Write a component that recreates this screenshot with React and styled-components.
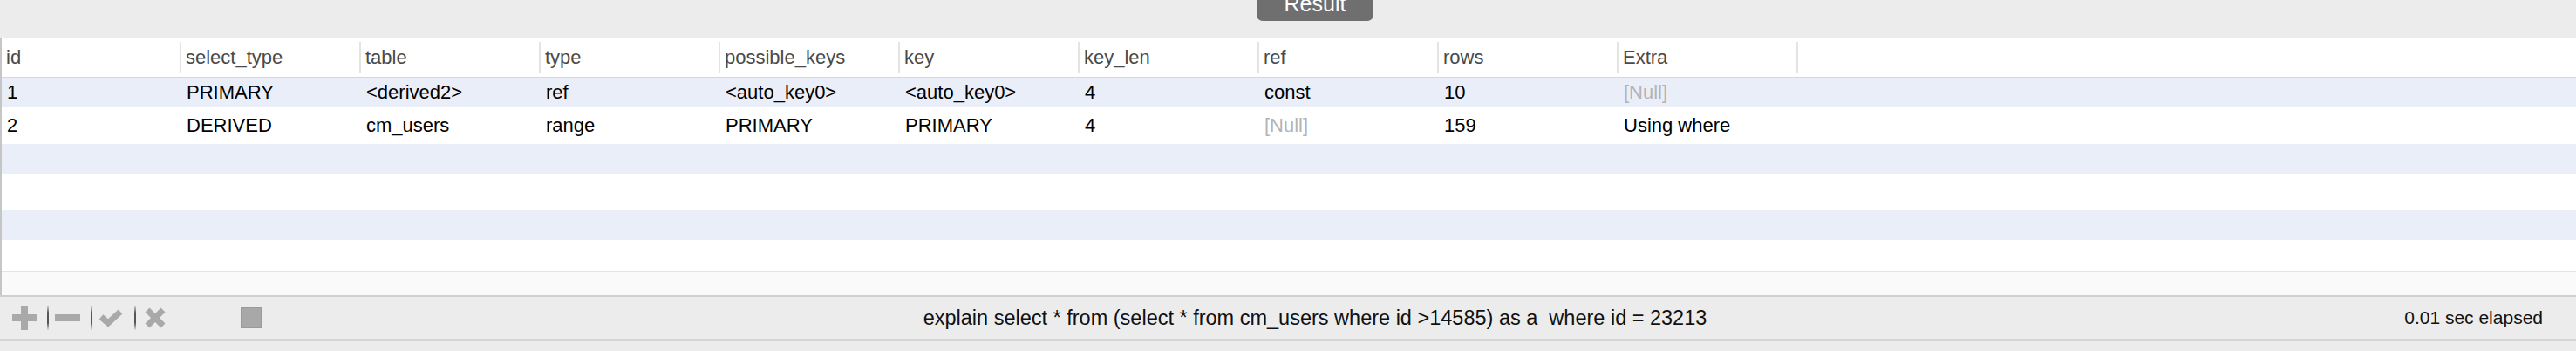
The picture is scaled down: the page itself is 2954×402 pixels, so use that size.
import React from "react"
import styled, { createGlobalStyle } from "styled-components"

const GlobalStyle = createGlobalStyle`
    html, body {
        margin: 0;
        padding: 0;
        background: #ececec;
    }
    body {
        font-family: "Liberation Sans", Arial, sans-serif;
    }
`

const COL_WIDTH = 206

const columns = ["id", "select_type", "table", "type", "possible_keys", "key", "key_len", "ref", "rows", "Extra"]

const rows = [
    ["1", "PRIMARY", "<derived2>", "ref", "<auto_key0>", "<auto_key0>", "4", "const", "10", null],
    ["2", "DERIVED", "cm_users", "range", "PRIMARY", "PRIMARY", "4", null, "159", "Using where"],
    [], [], [], [],
]

const Window = styled.div`
    width: 2954px;
    height: 402px;
    display: flex;
    flex-direction: column;
    overflow: hidden;
    background: #ececec;
`

const TopBar = styled.div`
    height: 43px;
    flex-shrink: 0;
    display: flex;
    justify-content: center;
    align-items: flex-start;
    padding-left: 62px;
    background: #ececec;
    border-bottom: 1px solid #d2d2d2;
`

const Tab = styled.div`
    width: 134px;
    height: 24px;
    overflow: hidden;
    display: flex;
    justify-content: center;
    background: #6f6f6f;
    border-radius: 0 0 7px 7px;
`

const TabLabel = styled.span`
    display: block;
    margin-top: -8px;
    line-height: 24px;
    font-size: 25px;
    color: #ffffff;
`

const Grid = styled.div`
    display: flex;
    flex-direction: column;
    border-left: 2px solid #c6c6c6;
    background: #ffffff;
`

const HeaderRow = styled.div`
    height: 44px;
    display: flex;
    border-bottom: 1px solid #d6d6d6;
    background: #ffffff;
`

const HeaderCell = styled.div`
    width: ${COL_WIDTH}px;
    flex-shrink: 0;
    display: flex;
    align-items: center;
    box-sizing: border-box;
    padding-left: 5px;
`

const HeaderText = styled.span`
    flex: 1;
    font-size: 22px;
    color: #4a4a4a;
    white-space: nowrap;
`

const Divider = styled.div`
    width: 2px;
    height: 36px;
    background: #e4e4e4;
`

const Body = styled.div`
    height: 221px;
    overflow: hidden;
    display: flex;
    flex-direction: column;
`

const Row = styled.div`
    height: ${({ $odd }) => ($odd ? 34 : 42)}px;
    flex-shrink: 0;
    display: flex;
    align-items: center;
    background: ${({ $odd }) => ($odd ? "#eaeef8" : "#ffffff")};
`

const Cell = styled.div`
    width: ${COL_WIDTH}px;
    flex-shrink: 0;
    box-sizing: border-box;
    padding-left: 6px;
    font-size: 22px;
    white-space: nowrap;
    color: ${({ $null }) => ($null ? "#b4b4b4" : "#000000")};
`

const FooterStrip = styled.div`
    height: 26px;
    border-top: 2px solid #e4e4e4;
    background: #fafafa;
`

const Toolbar = styled.div`
    height: 48px;
    flex-shrink: 0;
    display: grid;
    grid-template-columns: 400px 1fr 338px;
    align-items: center;
    border-top: 2px solid #cfcfcf;
    border-bottom: 2px solid #d6d6d6;
    background: #ececec;
`

const Tools = styled.div`
    display: flex;
    align-items: center;
    padding-left: 14px;
`

const ToolButton = styled.div`
    display: flex;
    align-items: center;
    justify-content: center;
    margin-right: ${({ $gap }) => $gap}px;
`

const ToolSep = styled.div`
    width: 2px;
    height: 28px;
    margin-right: ${({ $gap }) => $gap}px;
    background: linear-gradient(to bottom, rgba(80, 80, 80, 0.1), #555 30%, #555 70%, rgba(80, 80, 80, 0.1));
`

const Query = styled.div`
    text-align: center;
    font-size: 23.5px;
    color: #111111;
    white-space: pre;
`

const Elapsed = styled.div`
    text-align: right;
    padding-right: 38px;
    font-size: 21px;
    color: #111111;
    white-space: nowrap;
`

const ICON = "#a9a9a9"

function PlusIcon() {
    return (
        <svg width="28" height="28" viewBox="0 0 28 28">
            <rect x="10" y="0" width="8" height="28" fill={ICON} />
            <rect x="0" y="10" width="28" height="8" fill={ICON} />
        </svg>
    )
}

function MinusIcon() {
    return (
        <svg width="29" height="8" viewBox="0 0 29 8">
            <rect x="0" y="0" width="29" height="8" fill={ICON} />
        </svg>
    )
}

function CheckIcon() {
    return (
        <svg width="28" height="20" viewBox="0 0 28 20">
            <polyline points="3,9 11,16 25,3" fill="none" stroke={ICON} strokeWidth="7" strokeLinejoin="miter" />
        </svg>
    )
}

function CrossIcon() {
    return (
        <svg width="24" height="24" viewBox="0 0 24 24">
            <line x1="3" y1="3" x2="21" y2="21" stroke={ICON} strokeWidth="7" />
            <line x1="21" y1="3" x2="3" y2="21" stroke={ICON} strokeWidth="7" />
        </svg>
    )
}

function StopIcon() {
    return (
        <svg width="24" height="24" viewBox="0 0 24 24">
            <rect x="0.5" y="0.5" width="23" height="23" fill="#a8a8a8" stroke="#9a9a9a" />
        </svg>
    )
}

export default function App() {
    return (
        <Window>
            <GlobalStyle />
            <TopBar>
                <Tab>
                    <TabLabel>Result</TabLabel>
                </Tab>
            </TopBar>
            <Grid>
                <HeaderRow>
                    {columns.map((name) => (
                        <HeaderCell key={name}>
                            <HeaderText>{name}</HeaderText>
                            <Divider />
                        </HeaderCell>
                    ))}
                </HeaderRow>
                <Body>
                    {rows.map((row, i) => (
                        <Row key={i} $odd={i % 2 === 0}>
                            {row.map((value, j) => (
                                <Cell key={j} $null={value === null}>
                                    {value === null ? "[Null]" : value}
                                </Cell>
                            ))}
                        </Row>
                    ))}
                </Body>
                <FooterStrip />
            </Grid>
            <Toolbar>
                <Tools>
                    <ToolButton $gap={12}><PlusIcon /></ToolButton>
                    <ToolSep $gap={7} />
                    <ToolButton $gap={12}><MinusIcon /></ToolButton>
                    <ToolSep $gap={7} />
                    <ToolButton $gap={13}><CheckIcon /></ToolButton>
                    <ToolSep $gap={10} />
                    <ToolButton $gap={86}><CrossIcon /></ToolButton>
                    <StopIcon />
                </Tools>
                <Query>{"explain select * from (select * from cm_users where id >14585) as a  where id = 23213"}</Query>
                <Elapsed>0.01 sec elapsed</Elapsed>
            </Toolbar>
        </Window>
    )
}
